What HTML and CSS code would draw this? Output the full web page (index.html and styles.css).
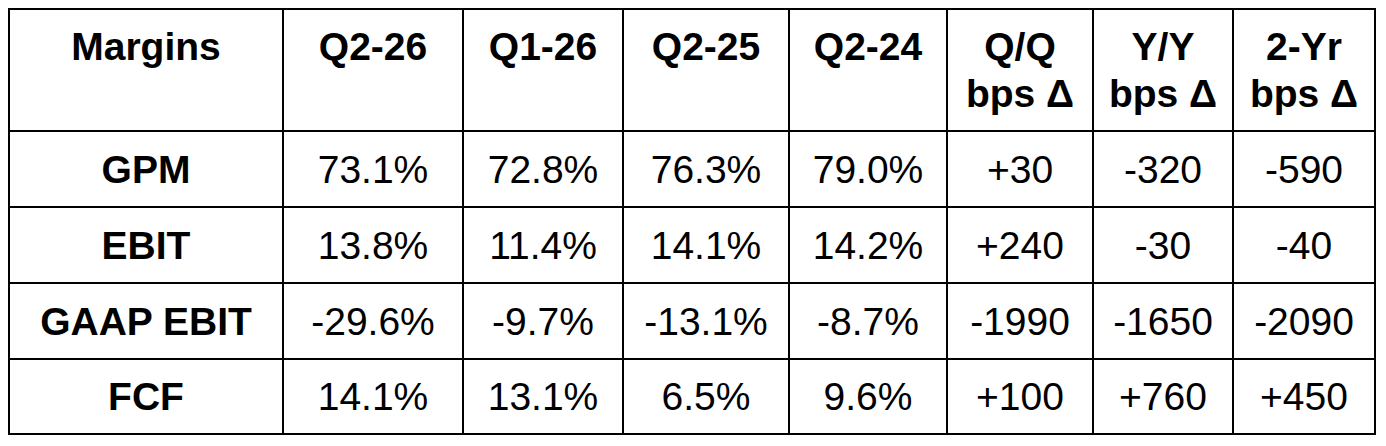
FILE: index.html
```html
<!DOCTYPE html>
<html>
<head>
<meta charset="utf-8">
<link rel="stylesheet" href="styles.css">
</head>
<body>
<div class="table">
  <div class="cell head">Margins</div>
  <div class="cell head">Q2-26</div>
  <div class="cell head">Q1-26</div>
  <div class="cell head">Q2-25</div>
  <div class="cell head">Q2-24</div>
  <div class="cell head">Q/Q<br>bps Δ</div>
  <div class="cell head">Y/Y<br>bps Δ</div>
  <div class="cell head">2-Yr<br>bps Δ</div>

  <div class="cell label">GPM</div>
  <div class="cell">73.1%</div>
  <div class="cell">72.8%</div>
  <div class="cell">76.3%</div>
  <div class="cell">79.0%</div>
  <div class="cell">+30</div>
  <div class="cell">-320</div>
  <div class="cell">-590</div>

  <div class="cell label">EBIT</div>
  <div class="cell">13.8%</div>
  <div class="cell">11.4%</div>
  <div class="cell">14.1%</div>
  <div class="cell">14.2%</div>
  <div class="cell">+240</div>
  <div class="cell">-30</div>
  <div class="cell">-40</div>

  <div class="cell label">GAAP EBIT</div>
  <div class="cell">-29.6%</div>
  <div class="cell">-9.7%</div>
  <div class="cell">-13.1%</div>
  <div class="cell">-8.7%</div>
  <div class="cell">-1990</div>
  <div class="cell">-1650</div>
  <div class="cell">-2090</div>

  <div class="cell label">FCF</div>
  <div class="cell">14.1%</div>
  <div class="cell">13.1%</div>
  <div class="cell">6.5%</div>
  <div class="cell">9.6%</div>
  <div class="cell">+100</div>
  <div class="cell">+760</div>
  <div class="cell">+450</div>
</div>
</body>
</html>
```
FILE: styles.css
```css
html, body {
  margin: 0;
  background: #ffffff;
}
body {
  padding: 8px;
  font-family: "Liberation Sans", Arial, sans-serif;
  color: #000000;
}
.table {
  display: grid;
  width: max-content;
  grid-template-columns: 272px 178px 158px 164px 156px 144px 138px 140px;
  grid-template-rows: 120px 74px 74px 74px 73px;
  gap: 2px;
  padding: 2px;
  background: #000000;
}
.cell {
  background: #ffffff;
  font-size: 39px;
  line-height: 47px;
  text-align: center;
  display: flex;
  align-items: center;
  justify-content: center;
}
.head {
  font-weight: bold;
  align-items: flex-start;
  padding-top: 13px;
  box-sizing: border-box;
}
.label {
  font-weight: bold;
}
```
